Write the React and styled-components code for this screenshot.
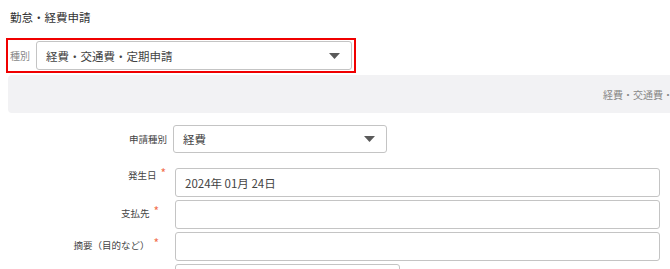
import React from 'react'
import styled, { createGlobalStyle } from 'styled-components'

const GlobalStyle = createGlobalStyle`
    html, body {
        margin: 0;
        padding: 0;
        background: #ffffff;
        overflow: hidden;
    }
    body {
        font-family: "Noto Sans CJK JP", "Noto Sans", sans-serif;
        color: #333;
    }
`;

const Page = styled.div`
    width: 670px;
    height: 269px;
    overflow: hidden;
`;

const Title = styled.h1`
    margin: 9px 0 0 10px;
    font-size: 11.5px;
    font-weight: 400;
    line-height: 17px;
    color: #333;
`;

const TypeBar = styled.div`
    box-sizing: border-box;
    margin: 12px 0 0 6px;
    width: 350px;
    height: 35px;
    border: 2px solid #f00000;
    display: flex;
    align-items: center;
`;

const TypeLabel = styled.span`
    width: 28px;
    font-size: 10px;
    color: #888;
    padding-left: 2px;
    box-sizing: border-box;
`;

const Select = styled.div`
    box-sizing: border-box;
    width: ${p => p.$width}px;
    height: ${p => p.$height}px;
    margin-left: ${p => p.$offset || 0}px;
    border: 1px solid #c4c4c4;
    border-radius: 3px;
    background: #fff;
    display: flex;
    align-items: center;
    justify-content: space-between;
    padding: 0 11px 0 9px;
    font-size: 11.5px;
    color: #444;
`;

const Caret = () => (
    <svg width="11" height="6" viewBox="0 0 11 6">
        <path d="M0 0 L11 0 L5.5 6 Z" fill="#5a5a5a" />
    </svg>
);

const Panel = styled.div`
    box-sizing: border-box;
    margin: 2px 0 0 8px;
    width: 820px;
    height: 38px;
    background: #f2f2f4;
    border-radius: 4px;
    display: flex;
    align-items: center;
    justify-content: flex-end;
    padding-right: 115px;
    font-size: 10px;
    color: #888;
`;

const Form = styled.div`
    margin-top: 12px;
    display: grid;
    grid-template-columns: 167px 1fr;
    align-items: center;
`;

const Label = styled.div`
    display: flex;
    justify-content: flex-end;
    align-items: center;
    padding-right: ${p => p.$pad || 0}px;
    font-size: 9.5px;
    color: #444;
    white-space: nowrap;
`;

const Required = styled.span`
    color: #f2704f;
    font-size: 12px;
    margin-left: 4px;
    position: relative;
    top: -3px;
`;

const Input = styled.div`
    box-sizing: border-box;
    width: ${p => p.$width}px;
    height: 29px;
    margin-left: 8px;
    margin-top: ${p => p.$top || 3}px;
    border: 1px solid #c4c4c4;
    border-radius: 3px;
    background: #fff;
    display: flex;
    align-items: center;
    padding-left: 9px;
    font-size: 11.5px;
    color: #444;
`;

const App = () => {
    return (
        <Page>
            <GlobalStyle />
            <Title>勤怠・経費申請</Title>
            <TypeBar>
                <TypeLabel>種別</TypeLabel>
                <Select $width={316} $height={29}>
                    <span>経費・交通費・定期申請</span>
                    <Caret />
                </Select>
            </TypeBar>
            <Panel>経費・交通費・定期申請</Panel>
            <Form>
                <Label>申請種別</Label>
                <Select $width={214} $height={28} $offset={6}>
                    <span>経費</span>
                    <Caret />
                </Select>

                <Label $pad={1}>発生日<Required>*</Required></Label>
                <Input $width={485} $top={15}>2024年 01月 24日</Input>

                <Label $pad={8}>支払先<Required>*</Required></Label>
                <Input $width={485} />

                <Label $pad={8}>摘要（目的など）<Required>*</Required></Label>
                <Input $width={485} />

                <Label />
                <Input $width={225} />
            </Form>
        </Page>
    )
}

export default App;
